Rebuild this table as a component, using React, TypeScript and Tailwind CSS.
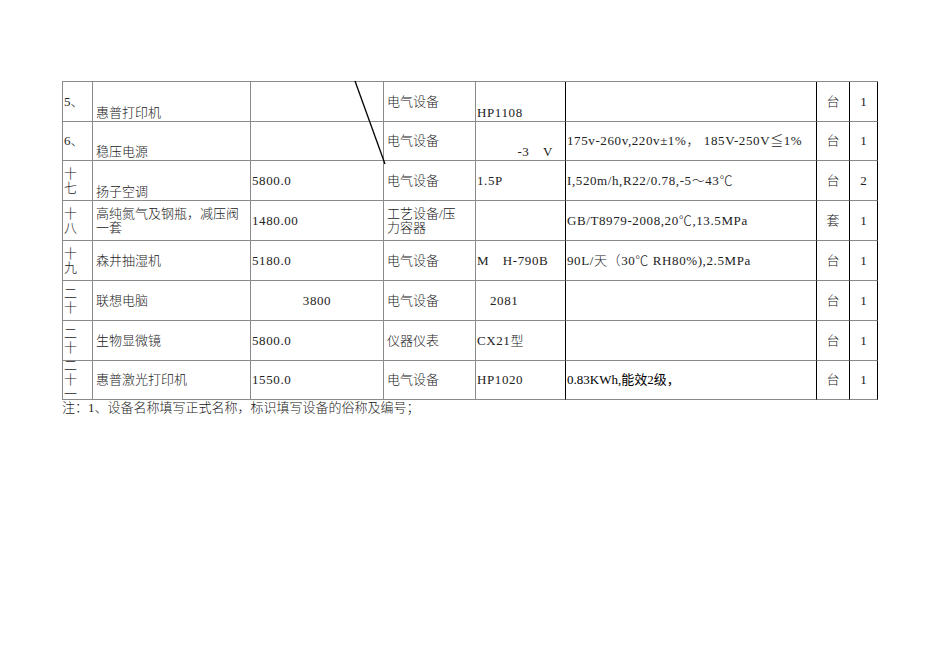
import type { ReactNode } from "react";

type Row = {
  h: string;
  idx: string;
  name: ReactNode;
  nameEnd?: boolean;
  price?: string;
  priceCenter?: boolean;
  cat: ReactNode;
  model?: ReactNode;
  modelEnd?: boolean;
  modelClass?: string;
  spec?: ReactNode;
  specPlain?: boolean;
  unit: string;
  qty: string;
};

const rows: Row[] = [
  { h: "h-[40px]", idx: "5、", name: "惠普打印机", nameEnd: true, cat: "电气设备", model: "HP1108", modelEnd: true, unit: "台", qty: "1" },
  {
    h: "h-[39px]",
    idx: "6、",
    name: "稳压电源",
    nameEnd: true,
    cat: "电气设备",
    model: "-3　V",
    modelEnd: true,
    modelClass: "justify-end pr-[12px]",
    spec: "175v-260v,220v±1%， 185V-250V≦1%",
    unit: "台",
    qty: "1",
  },
  { h: "h-[40px]", idx: "十七", name: "扬子空调", nameEnd: true, price: "5800.0", cat: "电气设备", model: "1.5P", spec: "I,520m/h,R22/0.78,-5～43℃", unit: "台", qty: "2" },
  {
    h: "h-[40px]",
    idx: "十八",
    name: (
      <>
        高纯氮气及钢瓶，减压阀
        <br />
        一套
      </>
    ),
    price: "1480.00",
    cat: (
      <>
        工艺设备/压
        <br />
        力容器
      </>
    ),
    spec: "GB/T8979-2008,20℃,13.5MPa",
    unit: "套",
    qty: "1",
  },
  { h: "h-[40px]", idx: "十九", name: "森井抽湿机", price: "5180.0", cat: "电气设备", model: "M　H-790B", spec: "90L/天（30℃ RH80%),2.5MPa", unit: "台", qty: "1" },
  { h: "h-[40px]", idx: "二十", name: "联想电脑", price: "3800", priceCenter: true, cat: "电气设备", model: "2081", modelClass: "pl-[14px]", unit: "台", qty: "1" },
  { h: "h-[40px]", idx: "二十", name: "生物显微镜", price: "5800.0", cat: "仪器仪表", model: "CX21型", unit: "台", qty: "1" },
  {
    h: "h-[39px]",
    idx: "二十一",
    name: "惠普激光打印机",
    price: "1550.0",
    cat: "电气设备",
    model: "HP1020",
    spec: "0.83KWh,能效2级，",
    specPlain: true,
    unit: "台",
    qty: "1",
  },
];

// latin runs set a little looser, like the half-width Song face in the sheet
const latin = "tracking-[0.6px] whitespace-pre";

function Cell({ children, className = "" }: { children?: ReactNode; className?: string }) {
  return <div className={`flex overflow-hidden border-b border-r border-b-[#8a8a8a] ${className}`}>{children}</div>;
}

const grey = "border-r-[#8a8a8a]";
const black = "border-r-black";

export default function App() {
  return (
    <div className="w-[950px] h-[672px] bg-white pt-[81px] pl-[62px] font-['Liberation_Serif','Noto_Sans_CJK_SC',serif] text-[13px] leading-[14px] font-light text-[#222]">
      <div className="relative w-[816px] border-l border-t border-[#8a8a8a]">
        {rows.map((r, i) => (
          <div key={i} className={`grid grid-cols-[30px_158px_133px_92px_90px_251px_33px_28px] ${r.h}`}>
            <Cell className={`${grey} flex-col justify-center pl-[1px]`}>
              {r.idx.endsWith("、") ? (
                <span>{r.idx}</span>
              ) : (
                r.idx.split("").map((c, j) => <span key={j}>{c}</span>)
              )}
            </Cell>
            <Cell className={`${grey} pl-[3px] ${r.nameEnd ? "items-end pb-[1px]" : "items-center"}`}>
              <span>{r.name}</span>
            </Cell>
            <Cell className={`${grey} items-center ${r.priceCenter ? "justify-center" : "pl-[1px]"}`}>
              <span className={latin}>{r.price}</span>
            </Cell>
            <Cell className={`${grey} items-center pl-[3px]`}>
              <span>{r.cat}</span>
            </Cell>
            <Cell className={`${black} pl-[1px] ${r.modelEnd ? "items-end pb-[1px]" : "items-center"} ${r.modelClass ?? ""}`}>
              <span className={latin}>{r.model}</span>
            </Cell>
            <Cell className={`${black} items-center pl-[1px]`}>
              <span className={r.specPlain ? "whitespace-nowrap text-black font-normal" : latin}>{r.spec}</span>
            </Cell>
            <Cell className={`${black} items-center justify-center`}>
              <span>{r.unit}</span>
            </Cell>
            <Cell className={`${black} items-center justify-center`}>
              <span>{r.qty}</span>
            </Cell>
          </div>
        ))}
        <svg className="pointer-events-none absolute left-0 top-0 overflow-visible" width="816" height="320">
          <line x1="292" y1="-1" x2="322" y2="82" stroke="#000" strokeWidth="1.3" />
        </svg>
      </div>
      <div className="mt-[1px]">注：1、设备名称填写正式名称，标识填写设备的俗称及编号；</div>
    </div>
  );
}
